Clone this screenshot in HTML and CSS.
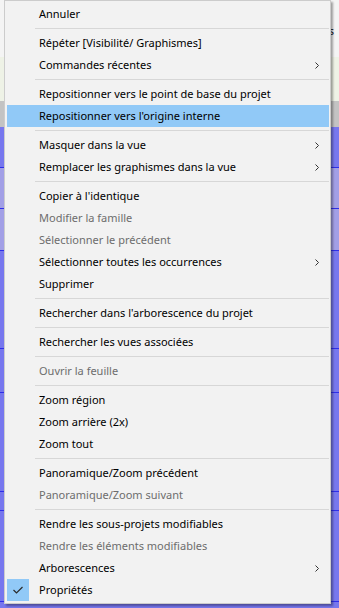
FILE: index.html
```html
<!DOCTYPE html>
<html lang="fr">
<head>
  <meta charset="UTF-8" />
  <meta name="viewport" content="width=device-width, initial-scale=1.0"/>
  <title>Menu contextuel</title>
  <link rel="stylesheet" href="styles.css">
</head>
<body>
  <!-- fenetre derriere le menu -->
  <div class="backdrop">
    <div class="bg-top"><span class="bg-word">Paramètres</span></div>
    <div class="bg-green"></div>
    <div class="bg-grey"></div>
    <div class="sheet">
      <div class="row dark h41"></div>
      <div class="row light h41"></div>
      <div class="row light h42"></div>
      <div class="row dark h98"></div>
      <div class="row dark h44"></div>
      <div class="row dark h99"></div>
      <div class="row dark h19"></div>
      <div class="row dark h91"></div>
      <div class="row foot"></div>
    </div>
  </div>

  <div class="menu">
    <div class="item">Annuler</div>
    <div class="sep"></div>
    <div class="item">Répéter [Visibilité/ Graphismes]</div>
    <div class="item">Commandes récentes<svg class="arrow" width="4" height="7" viewBox="0 0 4 7"><polyline points="0.5,0.5 3.5,3.5 0.5,6.5" fill="none" stroke="#333" stroke-width="1"/></svg></div>
    <div class="sep"></div>
    <div class="item">Repositionner vers le point de base du projet</div>
    <div class="item active">Repositionner vers l'origine interne</div>
    <div class="sep"></div>
    <div class="item">Masquer dans la vue<svg class="arrow" width="4" height="7" viewBox="0 0 4 7"><polyline points="0.5,0.5 3.5,3.5 0.5,6.5" fill="none" stroke="#333" stroke-width="1"/></svg></div>
    <div class="item">Remplacer les graphismes dans la vue<svg class="arrow" width="4" height="7" viewBox="0 0 4 7"><polyline points="0.5,0.5 3.5,3.5 0.5,6.5" fill="none" stroke="#333" stroke-width="1"/></svg></div>
    <div class="sep"></div>
    <div class="item">Copier à l'identique</div>
    <div class="item disabled">Modifier la famille</div>
    <div class="item disabled">Sélectionner le précédent</div>
    <div class="item">Sélectionner toutes les occurrences<svg class="arrow" width="4" height="7" viewBox="0 0 4 7"><polyline points="0.5,0.5 3.5,3.5 0.5,6.5" fill="none" stroke="#333" stroke-width="1"/></svg></div>
    <div class="item">Supprimer</div>
    <div class="sep"></div>
    <div class="item">Rechercher dans l'arborescence du projet</div>
    <div class="sep"></div>
    <div class="item">Rechercher les vues associées</div>
    <div class="sep"></div>
    <div class="item disabled">Ouvrir la feuille</div>
    <div class="sep"></div>
    <div class="item">Zoom région</div>
    <div class="item">Zoom arrière (2x)</div>
    <div class="item">Zoom tout</div>
    <div class="sep"></div>
    <div class="item">Panoramique/Zoom précédent</div>
    <div class="item disabled">Panoramique/Zoom suivant</div>
    <div class="sep"></div>
    <div class="item">Rendre les sous-projets modifiables</div>
    <div class="item disabled">Rendre les éléments modifiables</div>
    <div class="item">Arborescences<svg class="arrow" width="4" height="7" viewBox="0 0 4 7"><polyline points="0.5,0.5 3.5,3.5 0.5,6.5" fill="none" stroke="#333" stroke-width="1"/></svg></div>
    <div class="item">
      <span class="check">
        <svg width="22" height="22" viewBox="0 0 22 22"><polyline points="6.5,11 9.5,14 15.5,8" fill="none" stroke="#2b2b2b" stroke-width="1.2"/></svg>
      </span>
      Propriétés
    </div>
  </div>
</body>
</html>
```

FILE: styles.css
```css
body {
  margin: 0;
  width: 339px;
  height: 608px;
  overflow: hidden;
  position: relative;
  font-family: "Noto Sans", sans-serif;
  font-size: 11px;
}

/* fond */
.backdrop {
  display: flex;
  flex-direction: column;
  height: 608px;
}

.bg-top {
  height: 57px;
  background: #f4f4f4;
  display: flex;
  justify-content: flex-end;
  padding: 23px 5px 0 0;
  box-sizing: border-box;
  color: #222;
}

.bg-green {
  height: 44px;
  background: #eef2e6;
}

.bg-grey {
  height: 26px;
  background: #c3c3c3;
}

.sheet {
  flex: 1;
  display: flex;
  flex-direction: column;
  background: #7777ee;
}

.row { border-bottom: 1px solid #2e2ee8; }
.row.dark { background: #7777ee; }
.row.light { background: #a29fe6; }
.h41 { height: 40px; }
.h42 { height: 41px; }
.h98 { height: 97px; }
.h44 { height: 43px; }
.h99 { height: 98px; }
.h19 { height: 18px; }
.h91 { height: 90px; }
.row.foot { flex: 1; border: none; }

/* menu */
.menu {
  position: absolute;
  left: 4px;
  top: 0;
  width: 322px;
  padding: 2px 1px 2px 2px;
  background: #f2f2f2;
  border: 1px solid #cccccc;
  box-shadow: 2px 2px 2px rgba(0, 0, 0, 0.35);
  color: #000;
}

.item {
  position: relative;
  height: 22px;
  line-height: 22px;
  padding-left: 32px;
  white-space: nowrap;
}

.item.active { background: #91c9f7; }
.item.disabled { color: #6d6d6d; }

.arrow {
  position: absolute;
  right: 10px;
  top: 8px;
}

.sep {
  height: 1px;
  margin: 3px 0 3px 28px;
  background: #d7d7d7;
}

.check {
  position: absolute;
  left: 0;
  top: 0;
  width: 22px;
  height: 22px;
  background: #91c9f7;
}

.check svg { display: block; }
```
